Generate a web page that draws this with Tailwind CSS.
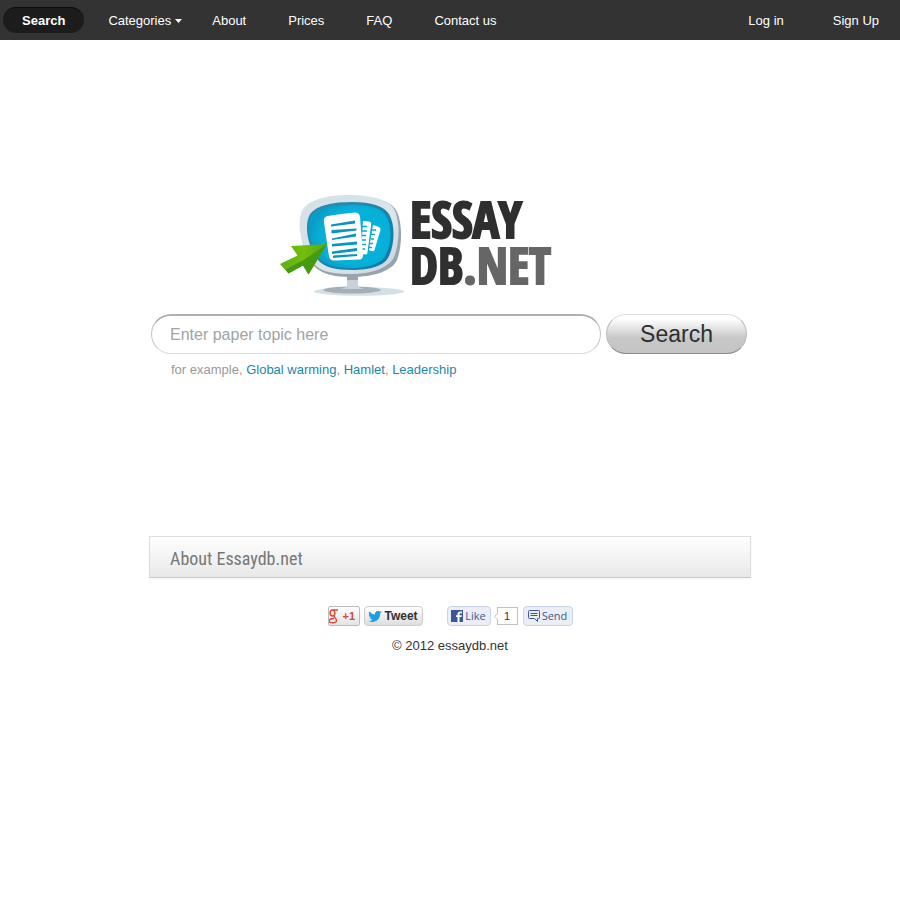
<!DOCTYPE html>
<html lang="en">
<head>
<meta charset="utf-8">
<meta name="viewport" content="width=device-width, initial-scale=1">
<title>Essaydb.net</title>
<script src="https://cdn.jsdelivr.net/npm/@tailwindcss/browser@4"></script>
</head>
<body class="min-h-screen bg-white font-['Liberation_Sans',Arial,sans-serif] text-[13px] leading-4 text-[#333]">
<header class="bg-[#333] text-white">
  <nav class="flex h-10 items-center justify-between px-[3px]" aria-label="Main">
    <ul class="flex items-center gap-[6px]">
      <li><a href="#" class="flex h-[26px] items-center rounded-full border-t border-[#0c0c0c] bg-[#1c1c1c] px-[19px] font-bold">Search</a></li>
      <li><a href="#" class="flex h-[26px] items-center gap-1 border-t border-transparent pl-[18px] pr-[6px]">Categories
        <svg class="h-1 w-[7px]" viewBox="0 0 7 4" fill="#fff" aria-hidden="true"><path d="M0 0h7L3.5 4z"/></svg></a></li>
      <li><a href="#" class="flex h-[26px] items-center border-t border-transparent px-[18px]">About</a></li>
      <li><a href="#" class="flex h-[26px] items-center border-t border-transparent px-[18px]">Prices</a></li>
      <li><a href="#" class="flex h-[26px] items-center border-t border-transparent px-[18px]">FAQ</a></li>
      <li><a href="#" class="flex h-[26px] items-center border-t border-transparent px-[18px]">Contact us</a></li>
    </ul>
    <ul class="flex items-center gap-[13px]">
      <li><a href="#" class="flex h-[26px] items-center border-t border-transparent px-[18px]">Log in</a></li>
      <li><a href="#" class="flex h-[26px] items-center border-t border-transparent px-[18px]">Sign Up</a></li>
    </ul>
  </nav>
</header>

<main class="mx-auto w-full max-w-[602px] pt-[152px]">
  <h1 class="ml-[129px]">
    <a href="#" class="flex items-start gap-1" aria-label="Essay DB.net">
      <svg class="h-[108px] w-[128px] shrink-0" viewBox="278 192 128 108" aria-hidden="true">
        <defs>
          <linearGradient id="frame" x1="0" y1="0" x2="1" y2="1"><stop offset="0" stop-color="#d3e0e5"/><stop offset=".6" stop-color="#dbe5ea"/><stop offset="1" stop-color="#c8d2d9"/></linearGradient>
          <linearGradient id="edge" x1="0" y1="0" x2="1" y2="1"><stop offset="0" stop-color="#2a8fb8"/><stop offset="1" stop-color="#0a7ca3"/></linearGradient>
          <radialGradient id="screen" cx=".6" cy=".5" r=".6"><stop offset="0" stop-color="#06b4dc"/><stop offset=".75" stop-color="#06b0d8"/><stop offset="1" stop-color="#089cc8"/></radialGradient>
          <linearGradient id="arrow" x1="0" y1="0" x2="1" y2="0"><stop offset="0" stop-color="#62ad14"/><stop offset=".5" stop-color="#72bf0c"/><stop offset="1" stop-color="#5aa80e"/></linearGradient>
        </defs>
        <ellipse cx="359" cy="291.500" rx="45.500" ry="4.200" fill="#d2e1e7"/>
        <ellipse cx="352" cy="290" rx="29" ry="3.500" fill="#a5afb7"/>
        <path d="M347 275h11v9c0 3 2 4 6 5h-24c5-1 7-2 7-5z" fill="#c8d2d8"/>
        <path d="M347 276h11v4h-11z" fill="#98a5ae"/>
        <path d="M305 210c9-11 27-14 47-14 22 0 38 5 44 14 6 10 7 34 1 50-5 11-24 17-45 17-18 0-31-3-38-11-12-14-18-42-9-56z" fill="#98a4ad"/>
        <path d="M303 209c9-11 27-14 47-14 22 0 38 5 44 14 6 10 6 34 0 48-5 11-23 17-43 17-17 0-30-2-37-10-12-14-19-41-11-55z" fill="url(#frame)"/>
        <path d="M310 214c7-9 23-12 42-12 19 0 32 4 37 12 6 10 6 29 0 42-4 10-19 14-37 14-17 0-28-3-34-10-9-11-15-34-8-46z" fill="url(#edge)"/>
        <path d="M311 216c7-8 22-11 41-11 18 0 30 3 34 11 6 10 6 26 0 38-4 10-18 14-34 14-17 0-27-3-33-10-8-11-14-32-8-42z" fill="url(#screen)"/>
        <path d="M373 225l6 2q2 1 1.500 3l-6 20q-1 2-3 1l-3-1z" fill="#fff"/>
        <path d="M363 221l6 .5q3 .5 2.500 3.500l-3.500 27q-.5 2.500-3 2.500l-4-.5z" fill="#fff"/>
        <path d="M372 223l-4 30" stroke="#0ba8ce" stroke-width="1.200" fill="none"/>
        <path d="M362 226.500h5M362 231h5M362 235.500h4M362 240h4M362 244.500h4M362 249h3M372 230h4M371 234.500h4M371 239h3M370 243.500h3M369 247.500h3" stroke="#0ba8ce" stroke-width="1.400"/>
        <path d="M328 216q13-2.500 27-3.500 4 0 5 4l3 39q0 3-3 4l-26 1q-4 0-5-4l-5-34q-1-5.500 4-6.500z" fill="#fff"/>
        <path d="M331 224.500l24-4v3l-24 3zM331.500 230l25-1.500v2l-25 3zM332 238.500l24-5v3l-24 3.500zM332 244l25-2.500v3l-25 2zM332 251.500l25-3.500v3l-25 3zM333 255.500l24-1.500v2l-24 2z" fill="#0896bc"/>
        <path d="M327 244l-18.500 30.500-5.500-9-14.500 8-8.500-9.500 17.500-8.500-6.500-9.500z" fill="url(#arrow)"/>
        <path d="M327 244l-18.500 30.500-5.500-9-14.500 8-3-4 19-10z" fill="#459a12"/>
      </svg>
      <span class="block pt-1 font-['Open_Sans_Condensed','Roboto_Condensed','Liberation_Sans',sans-serif] text-[50px] leading-[46px] font-bold text-[#2f2f2f] [-webkit-text-stroke:2px_currentColor]"><span class="block">ESSAY</span><span class="block">DB<span class="text-[#666]">.NET</span></span></span>
    </a>
  </h1>

  <form class="mt-[14px] flex items-center gap-[5px] pl-[2px] pr-[4px]" onsubmit="return false">
    <label for="topic" class="sr-only">Paper topic</label>
    <input id="topic" type="text" placeholder="Enter paper topic here" class="h-10 min-w-0 flex-1 rounded-full border border-t-2 border-[#ddd] border-t-[#b0b0b0] border-x-[#c4c4c4] bg-white px-[18px] text-base leading-6 placeholder:text-[#a3a3a3]">
    <button type="submit" class="h-10 w-[141px] rounded-full border border-[#bbb] border-t-[#ddd] border-b-[#8c8c8c] bg-linear-to-b from-white from-10% via-[#c8c8c8] via-60% to-[#c4c4c4] text-[23px] leading-6 text-[#2f2f2f]">Search</button>
  </form>
  <p class="mt-2 pl-[22px] text-[#999]">for example, <a href="#" class="text-[#1b87ad]">Global warming</a>, <a href="#" class="text-[#1b87ad]">Hamlet</a>, <a href="#" class="text-[#1b87ad]">Leadership</a></p>

  <section class="mt-[158px] border border-[#ddd] border-b-[#c8c8c8] bg-linear-to-b from-white to-[#e8e8e8] px-5 pt-3 pb-2 shadow-xs">
    <h2 class="font-['Roboto_Condensed','Liberation_Sans',sans-serif] text-lg leading-5 text-[#777]">About Essaydb.net</h2>
  </section>
</main>

<footer class="mt-7 flex flex-col items-center gap-3">
  <div class="flex h-5 items-center text-[11px] leading-4">
    <button type="button" class="flex h-5 w-8 items-center gap-1 rounded-xs border border-[#bbb] bg-linear-to-b from-white to-[#e4e4e4] font-bold text-[#d6492f]">
      <svg class="h-4 w-[10px] shrink-0" viewBox="0 0 10 16" fill="none" stroke="#dd4b39" aria-hidden="true"><ellipse cx="3.500" cy="5" rx="2.300" ry="3" stroke-width="1.600"/><path d="M4 2h5M5.500 7.500C4 9 7.500 10 7.500 12.500 7.500 15.500 0 15.500 0 13c0-2 3-2.500 5-2.500" stroke-width="1.400"/></svg>+1</button>
    <button type="button" class="ml-1 flex h-5 w-[59px] items-center justify-center gap-[2px] rounded-sm border border-[#ccc] bg-linear-to-b from-white to-[#dedede] font-bold text-[#333]">
      <svg class="h-[11px] w-[14px] shrink-0" viewBox="0 3 24 19" fill="#1b9fe0" aria-hidden="true"><path d="M24 5a10 10 0 0 1-3 1 5 5 0 0 0 2-3 10 10 0 0 1-3 1 5 5 0 0 0-8 5A14 14 0 0 1 2 4a5 5 0 0 0 1 6 5 5 0 0 1-2-1 5 5 0 0 0 4 5 5 5 0 0 1-2 0 5 5 0 0 0 5 4 10 10 0 0 1-8 2 14 14 0 0 0 21-13 10 10 0 0 0 3-2z"/></svg><span class="text-xs">Tweet</span></button>
    <button type="button" class="ml-6 flex h-5 w-11 items-center justify-center gap-[2px] rounded-sm border border-[#cad4e7] bg-[#eceef5] font-['Open_Sans',sans-serif] text-[#3b5998]">
      <svg class="h-3 w-3 shrink-0" viewBox="0 0 12 12" aria-hidden="true"><path d="M0 0h12v12H0z" fill="#3b5998"/><path d="M11 1.500H9.500Q6.500 1.500 6.500 4v1.200H5V7h1.500v5h2V7h2l.3-1.800H8.500V4q0-.7 1-.7H11z" fill="#fff"/></svg>Like</button>
    <span class="relative ml-[6px] flex h-[18px] w-[21px] items-center justify-center border border-[#c1c1c1] bg-white text-[#333]">
      <svg class="absolute top-[5px] -left-1 h-[7px] w-1" viewBox="0 0 4 7" aria-hidden="true"><path d="M4 0L.5 3.500 4 7" fill="#fff" stroke="#c1c1c1"/></svg>1</span>
    <button type="button" class="ml-[5px] flex h-5 w-[50px] items-center justify-center gap-[2px] rounded-sm border border-[#cad4e7] bg-[#eceef5] font-['Open_Sans',sans-serif] text-[#3b5998]">
      <svg class="h-3 w-3 shrink-0" viewBox="0 0 12 12" fill="none" stroke="#3b5998" aria-hidden="true"><path d="M1.500.5h9q1 0 1 1v6q0 1-1 1H9.500v3l-3-3h-5q-1 0-1-1v-6q0-1 1-1zM2.500 3.500h7M2.500 5.500h7"/></svg>Send</button>
  </div>
  <p>© 2012 essaydb.net</p>
</footer>
</body>
</html>
